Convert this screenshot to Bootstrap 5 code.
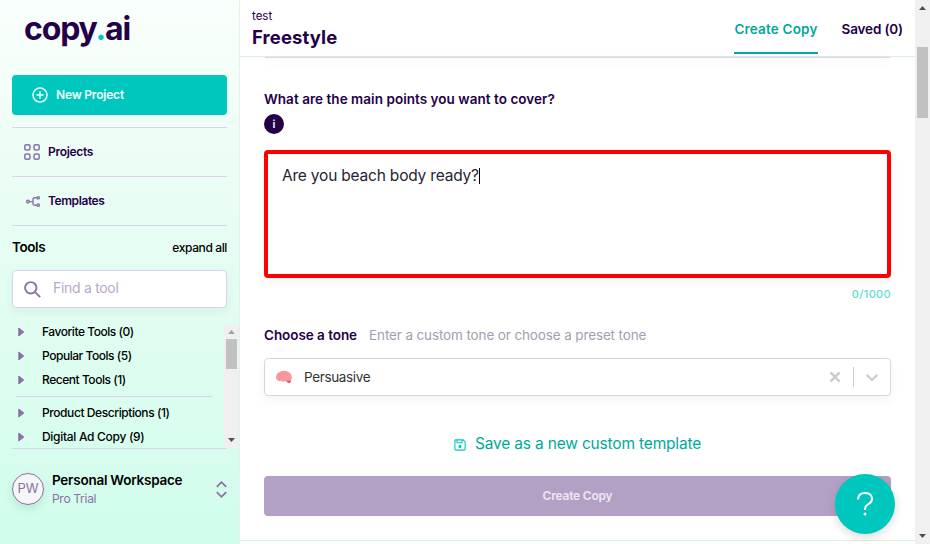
<!DOCTYPE html>
<html lang="en">
<head>
<meta charset="utf-8">
<meta name="viewport" content="width=device-width, initial-scale=1">
<title>copy.ai - Freestyle</title>
<link href="https://cdn.jsdelivr.net/npm/bootstrap@5.3.0/dist/css/bootstrap.min.css" rel="stylesheet">
<style>
:root{--ink:#240048;--teal:#00c7be;--teal-dark:#00a89d;--mauve:#8b71a4;--rule:#dcd3ea}
body{font-family:Inter,"Liberation Sans",sans-serif;color:#000;height:544px;overflow:hidden;background:#fff}
svg{display:block;flex:none}
.side{width:240px;padding:0 12px;background:linear-gradient(#fafffc,#ecfdf5 30%,#d0fdec);border-right:1px solid #e2f3ea}
.brand{height:75px;padding:9px 0 0 12px;font:700 32px/40px Inter,sans-serif;letter-spacing:-1.15px;color:var(--ink)}
.brand span{color:var(--teal)}
.new-btn{height:40px;background:var(--teal);color:#effffc;border-radius:4px;padding-left:20px;font-size:12px;letter-spacing:-.2px;font-weight:600;margin-bottom:12px}
.side-link{height:49px;border-top:1px solid var(--rule);padding-left:12px;font-size:12px;font-weight:600;letter-spacing:-.3px;color:var(--ink)}
.s-temp{letter-spacing:-.42px}
.tools-head{height:45px;border-top:1px solid var(--rule);padding-bottom:1px}
.tools-title{font-size:13.5px;font-weight:600;letter-spacing:-.4px}
.expand{font-size:12px;font-weight:500;letter-spacing:-.38px}
.find{height:38px;background:#fff;border:1px solid var(--rule);border-radius:4px;padding:0 0 2px 11px;gap:12px;font-size:14px;line-height:20px;letter-spacing:-.3px;color:#b8a8ca;box-shadow:0 4px 8px rgba(0,80,60,.06)}
.find svg{margin-top:2px}
.tool-wrap{height:141px;border-bottom:1px solid var(--rule);padding-top:12px}
.tool-list{width:200px;font-size:12px;font-weight:500;letter-spacing:-.46px}
.t4{letter-spacing:-.42px}
.t5{letter-spacing:-.3px}
.tool-item{height:24px;padding-left:6px;gap:17px}
.tool-rule{height:1px;background:var(--rule);margin:4px 0 4px 4px}
.bar-track{background:#f0f0f0;width:15px}
.tool-bar{margin:4px -12px 0 0;height:124px}
.user{height:80px}
.avatar-pw{width:32px;height:32px;border:1px solid var(--mauve);border-radius:50%;background:#f6f6f6;color:var(--mauve);font-size:13px;box-shadow:0 4px 8px rgba(0,80,60,.12)}
.ws{font-size:13.5px;line-height:18px;font-weight:600;letter-spacing:-.24px}
.plan{font-size:12px;line-height:18px;letter-spacing:-.3px;color:var(--mauve);padding-top:1px}
.top-head{height:57px;border-bottom:1px solid #d9f1e1;padding:0 12px}
.crumb{font-size:11.5px;line-height:14px;color:var(--ink);padding-top:9px}
.page-title{font-size:18.5px;line-height:28px;font-weight:700;letter-spacing:.1px;color:var(--ink);margin:0}
.tab-link{font-size:13.5px;font-weight:600;letter-spacing:.18px;color:var(--ink);height:54px;padding-top:7px;border-bottom:2px solid transparent}
.tab-link.active{color:var(--teal-dark);border-color:var(--teal-dark)}
.s-saved{letter-spacing:-.15px}
.form-area{height:484px;padding:0 24px;border-bottom:1px solid #d9f1e1}
.prev-field{height:1px;background:var(--rule);margin:0 1px;box-shadow:0 3px 8px rgba(0,80,60,.14)}
.field-label{font-size:13.5px;line-height:20px;font-weight:600;letter-spacing:-.05px;color:var(--ink)}
.q-label{margin-top:31px;letter-spacing:.04px}
.info-dot{width:20px;height:20px;border-radius:50%;background:var(--ink);color:#fff;font-size:11px;font-weight:600;margin:5px 0 16px}
.answer{height:128px;border:4px solid #f00;border-radius:4px;padding:10px 14px;font-size:15.5px;line-height:24px;letter-spacing:-.2px;color:#252533;box-shadow:0 4px 10px rgba(0,80,60,.06)}
.caret{width:1px;height:16px;background:#000}
.count{font-size:11px;line-height:16px;font-weight:500;letter-spacing:.35px;color:#5fdcd2;margin:8px 0 23px}
.hint{font-size:13.5px;letter-spacing:-.13px;color:#a09fb0;margin-left:12px}
.tone{height:38px;margin-top:13px;border:1px solid var(--rule);border-radius:4px;padding-left:10px;font-size:13.5px;letter-spacing:-.36px;color:#333;box-shadow:0 4px 10px rgba(0,80,60,.06)}
.s-pers{margin-left:11px}
.split{width:1px;height:20px;background:#ccc;margin:0 10px 0 12px}
.chev{margin-right:10px}
.save{height:24px;margin:36px 0 20px;color:var(--teal-dark);font-size:15.5px;letter-spacing:-.18px;gap:9px}
.save svg{margin-top:2px}
.create{height:40px;background:#b3a1c5;color:#eee6f3;border-radius:4px;font-size:12px;font-weight:600;letter-spacing:-.2px}
.help{width:60px;height:60px;left:835px;top:474px;border-radius:50%;background:var(--teal);box-shadow:0 3px 10px rgba(0,0,0,.15)}
</style>
<script src="https://cdn.jsdelivr.net/npm/bootstrap@5.3.0/dist/js/bootstrap.bundle.min.js"></script>
</head>
<body class="d-flex">
<aside class="side flex-shrink-0">
  <div class="brand">copy<span>.</span>ai</div>
  <div class="new-btn d-flex align-items-center">
    <svg width="16" height="16" viewBox="0 0 16 16" fill="none" stroke="#effffc" stroke-width="1.5"><circle cx="8" cy="8" r="7"/><path d="M8 4.4v7.2M4.4 8h7.2"/></svg>
    <span class="ms-2">New Project</span>
  </div>
  <div class="side-link d-flex align-items-center">
    <svg width="16" height="16" viewBox="0 0 16 16" fill="none" stroke="#8b71a4" stroke-width="1.5"><rect x=".8" y=".8" width="5.2" height="5.2" rx="1.5"/><rect x="10" y=".8" width="5.2" height="5.2" rx="1.5"/><rect x=".8" y="10" width="5.2" height="5.2" rx="1.5"/><rect x="10" y="10" width="5.2" height="5.2" rx="1.5"/></svg>
    <span class="ms-2">Projects</span>
  </div>
  <div class="side-link d-flex align-items-center">
    <svg width="16" height="16" viewBox="0 0 16 16" fill="none" stroke="#8b71a4" stroke-width="1.4"><circle cx="4" cy="8.6" r="1.4"/><circle cx="14.2" cy="4.8" r="1.2"/><circle cx="14.2" cy="12.2" r="1.2"/><path d="M5.4 8.6H9M13 4.8h-2.3Q9 4.8 9 6.2v4.6q0 1.4 1.7 1.4H13"/></svg>
    <span class="ms-2 s-temp">Templates</span>
  </div>
  <div class="tools-head d-flex align-items-center justify-content-between">
    <span class="tools-title">Tools</span><span class="expand">expand all</span>
  </div>
  <div class="find d-flex align-items-center">
    <svg width="17" height="17" viewBox="0 0 17 17" fill="none" stroke="#8b71a4" stroke-width="1.9"><circle cx="6.8" cy="6.8" r="5.7"/><path d="M10.8 10.8l5.4 5.4"/></svg>
    <span>Find a tool</span>
  </div>
  <div class="tool-wrap d-flex justify-content-between">
    <div class="tool-list">
      <div class="tool-item d-flex align-items-center"><svg width="7" height="10" viewBox="0 0 7 10"><path d="M.8 1L5.8 5 .8 9z" fill="#8b71a4" stroke="#8b71a4" stroke-linejoin="round"/></svg><span>Favorite Tools (0)</span></div>
      <div class="tool-item d-flex align-items-center"><svg width="7" height="10" viewBox="0 0 7 10"><path d="M.8 1L5.8 5 .8 9z" fill="#8b71a4" stroke="#8b71a4" stroke-linejoin="round"/></svg><span>Popular Tools (5)</span></div>
      <div class="tool-item d-flex align-items-center"><svg width="7" height="10" viewBox="0 0 7 10"><path d="M.8 1L5.8 5 .8 9z" fill="#8b71a4" stroke="#8b71a4" stroke-linejoin="round"/></svg><span>Recent Tools (1)</span></div>
      <div class="tool-rule"></div>
      <div class="tool-item d-flex align-items-center"><svg width="7" height="10" viewBox="0 0 7 10"><path d="M.8 1L5.8 5 .8 9z" fill="#8b71a4" stroke="#8b71a4" stroke-linejoin="round"/></svg><span class="t4">Product Descriptions (1)</span></div>
      <div class="tool-item d-flex align-items-center"><svg width="7" height="10" viewBox="0 0 7 10"><path d="M.8 1L5.8 5 .8 9z" fill="#8b71a4" stroke="#8b71a4" stroke-linejoin="round"/></svg><span class="t5">Digital Ad Copy (9)</span></div>
    </div>
    <div class="bar-track tool-bar flex-shrink-0"><svg width="15" height="124"><path d="M4 10l3.5-4L11 10z" fill="#a3a3a3"/><path d="M2 15h11v30H2z" fill="#c1c1c1"/><path d="M4 114l3.5 4 3.5-4z" fill="#505050"/></svg></div>
  </div>
  <div class="user d-flex align-items-center">
    <div class="avatar-pw d-flex align-items-center justify-content-center">PW</div>
    <div class="ms-2 flex-grow-1"><div class="ws">Personal Workspace</div><div class="plan">Pro Trial</div></div>
    <svg width="11" height="17" viewBox="0 0 11 17" fill="none" stroke="#8b71a4" stroke-width="1.8"><path d="M.8 5.8l4.7-4.6 4.7 4.6M.8 11.2l4.7 4.6 4.7-4.6"/></svg>
  </div>
</aside>
<main class="flex-grow-1">
  <header class="top-head d-flex justify-content-between">
    <div><div class="crumb">test</div><h1 class="page-title">Freestyle</h1></div>
    <nav class="d-flex gap-4">
      <div class="tab-link active d-flex align-items-center"><span>Create Copy</span></div>
      <div class="tab-link s-saved d-flex align-items-center"><span>Saved (0)</span></div>
    </nav>
  </header>
  <section class="form-area">
    <div class="prev-field"></div>
    <div class="field-label q-label"><span>What are the main points you want to cover?</span></div>
    <div class="info-dot d-flex align-items-center justify-content-center">i</div>
    <div class="answer d-flex align-items-start"><span>Are you beach body ready?</span><span class="caret mt-1"></span></div>
    <div class="count text-end"><span>0/1000</span></div>
    <div class="field-label d-flex"><span>Choose a tone</span><span class="hint fw-normal">Enter a custom tone or choose a preset tone</span></div>
    <div class="tone d-flex align-items-center">
      <svg width="18" height="14" viewBox="0 0 18 14"><path d="M10.500 9.500h5.500q.3 2.500-1.200 3.600-1.500.6-3-1z" fill="#d9606c"/><path d="M1 7.500Q1 3.600 4.200 2.200 8.500-.2 13 1.700 16.800 3.600 16.800 7.600q-.1 2.900-2.300 3-1.500.2-3 .1-2.700 1.600-5 .4Q1.200 11.400 1 7.500z" fill="#fa999d"/><path d="M3 6.500q1.600-1.900 3.300-.5M6.500 3.400q1.500-.9 2.700.8M8 7.800q1.900.9 3-1M11.500 3.500q1.600.2 1.500 2M13 8.500q1.300.2 1.800-1M4 9q1.200-.8 2 0" fill="none" stroke="#ee7f88" stroke-width=".6"/></svg>
      <span class="s-pers flex-grow-1">Persuasive</span>
      <svg width="12" height="12" viewBox="0 0 12 12" stroke="#ccc" stroke-width="2.6" stroke-linecap="round"><path d="M2.200 2.200l7.600 7.600M9.800 2.200l-7.600 7.600"/></svg>
      <span class="split"></span>
      <svg class="chev" width="16" height="12" viewBox="0 0 16 12" fill="none" stroke="#ccc" stroke-width="2.300" stroke-linecap="round"><path d="M3.300 4.500L8 9l4.700-4.500"/></svg>
    </div>
    <div class="save d-flex align-items-center justify-content-center">
      <svg width="12" height="12" viewBox="0 0 12 12" fill="none" stroke="#00c7be" stroke-width="1.100"><path d="M1.800.9h7.300l2 2v7.300q0 .9-.9.9H1.800q-.9 0-.9-.9V1.800q0-.9.9-.9zM3 1v2.700h5V1"/><circle cx="6" cy="7.400" r="1" fill="#00c7be"/></svg>
      <span>Save as a new custom template</span>
    </div>
    <div class="create d-flex align-items-center justify-content-center"><span>Create Copy</span></div>
  </section>
</main>
<div class="bar-track flex-shrink-0"><svg width="15" height="544"><path d="M4 10l3.500-4L11 10z" fill="#505050"/><path d="M2 47h11v71H2z" fill="#c1c1c1"/><path d="M4 534l3.500 4 3.500-4z" fill="#505050"/></svg></div>
<div class="help position-absolute d-flex align-items-center justify-content-center"><svg width="18" height="26" viewBox="0 0 18 26" fill="none" stroke="#fff" stroke-width="2"><path d="M2 8.500Q2.200 2 9 2t7 6q0 3-3.500 5T9 18v1"/><circle cx="9" cy="23" r="1.500" fill="#fff" stroke="none"/></svg></div>
</body>
</html>
